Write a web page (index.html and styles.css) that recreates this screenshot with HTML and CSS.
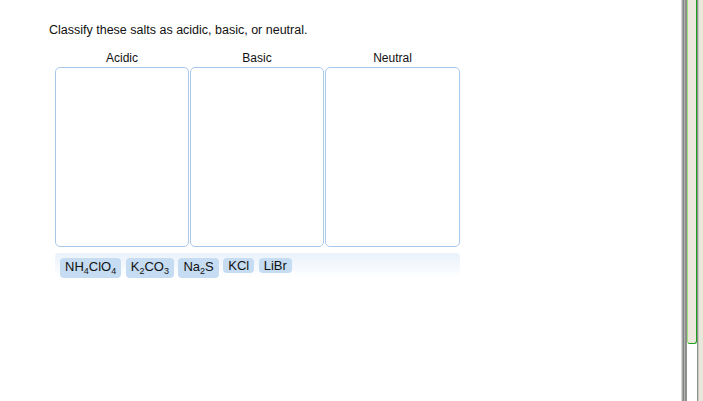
FILE: index.html
```html
<!DOCTYPE html>
<html>
<head>
<meta charset="utf-8">
<link rel="stylesheet" href="styles.css">
</head>
<body>
<div class="page">
  <p class="prompt">Classify these salts as acidic, basic, or neutral.</p>
  <div class="bins">
    <div class="bin">
      <div class="bin-label">Acidic</div>
      <div class="bin-box"></div>
    </div>
    <div class="bin">
      <div class="bin-label">Basic</div>
      <div class="bin-box"></div>
    </div>
    <div class="bin">
      <div class="bin-label">Neutral</div>
      <div class="bin-box"></div>
    </div>
  </div>
  <div class="tray">
    <span class="chip tall">NH<sub>4</sub>ClO<sub>4</sub></span>
    <span class="chip tall">K<sub>2</sub>CO<sub>3</sub></span>
    <span class="chip tall">Na<sub>2</sub>S</span>
    <span class="chip">KCl</span>
    <span class="chip">LiBr</span>
  </div>
</div>
<div class="scrollbar">
  <div class="sb-thumb"></div>
</div>
</body>
</html>
```

FILE: styles.css
```css
html, body {
  margin: 0;
  padding: 0;
  background: #fff;
}
body {
  font-family: "Liberation Sans", Arial, sans-serif;
  color: #111;
  width: 703px;
  height: 401px;
  overflow: hidden;
}
.page {
  padding: 22px 0 0 49px;
}
.prompt {
  margin: 0;
  font-size: 12.5px;
  line-height: 17px;
}
.bins {
  display: flex;
  gap: 1px;
  margin: 12px 0 0 6px;
}
.bin {
  display: flex;
  flex-direction: column;
  width: 134px;
}
.bin:last-child {
  width: 135px;
}
.bin-label {
  font-size: 12px;
  line-height: 14px;
  text-align: center;
  height: 14px;
  margin-bottom: 2px;
}
.bin-box {
  height: 178px;
  border: 1px solid #a9c9ea;
  border-radius: 5px;
  background: #fff;
}
.tray {
  display: flex;
  align-items: flex-start;
  gap: 4.5px;
  margin: 6px 0 0 6px;
  width: 400px;
  height: 19px;
  padding: 5px 0 0 5px;
  background: linear-gradient(to bottom, #eaf2fb 0%, #f5f9fd 60%, #ffffff 100%);
  border-radius: 4px 4px 0 0;
}
.chip {
  display: inline-block;
  background: #c6dcf2;
  border-radius: 4px;
  font-size: 13px;
  line-height: 15px;
  padding: 0 5px;
  color: #111;
}
.chip.tall {
  padding-top: 1px;
  padding-bottom: 4px;
}
.chip sub {
  font-size: 9px;
  line-height: 0;
  vertical-align: -3px;
}
.scrollbar {
  position: fixed;
  top: 0;
  right: 0;
  width: 22px;
  height: 401px;
  background: linear-gradient(to right,
    #d6d6d6 0px, #d6d6d6 1px,
    #a7a9a6 1px, #a7a9a6 2px,
    #7f837f 2px, #7f837f 3px,
    #b1b3b0 3px, #b1b3b0 4px,
    #8c8f8b 4px, #8c8f8b 6px,
    #ffffff 6px, #ffffff 16px,
    #8d918c 16px, #8d918c 17px,
    #c9cac6 17px, #c9cac6 18px,
    #e9e6da 18px, #e9e6da 22px);
}
.sb-thumb {
  position: absolute;
  top: -6px;
  left: 6px;
  width: 8px;
  height: 349px;
  background: #ece9dc;
  border-left: 1px solid #9ee07c;
  border-right: 1px solid #1aa01a;
  border-bottom: 1px solid #1aa01a;
  border-radius: 0 0 3px 3px;
}
```
